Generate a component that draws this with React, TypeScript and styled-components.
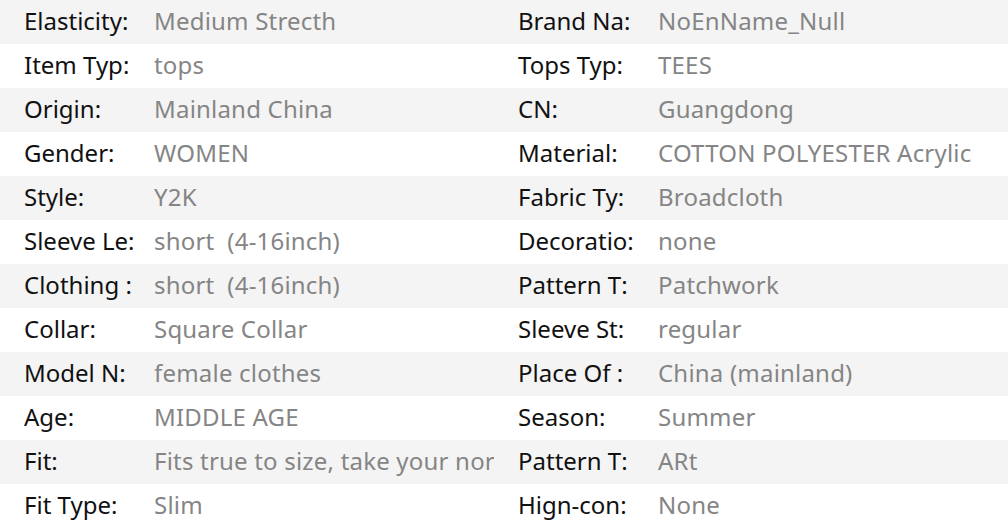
import styled, { createGlobalStyle } from 'styled-components';

const GlobalStyle = createGlobalStyle`
  html, body {
    margin: 0;
    padding: 0;
    background: #ffffff;
  }
  body {
    font-family: 'Noto Sans', 'Open Sans', sans-serif;
  }
`;

const specs: [string, string, string, string][] = [
  ['Elasticity:', 'Medium Strecth', 'Brand Na:', 'NoEnName_Null'],
  ['Item Typ:', 'tops', 'Tops Typ:', 'TEES'],
  ['Origin:', 'Mainland China', 'CN:', 'Guangdong'],
  ['Gender:', 'WOMEN', 'Material:', 'COTTON POLYESTER Acrylic'],
  ['Style:', 'Y2K', 'Fabric Ty:', 'Broadcloth'],
  ['Sleeve Le:', 'short\u00a0 (4-16inch)', 'Decoratio:', 'none'],
  ['Clothing :', 'short\u00a0 (4-16inch)', 'Pattern T:', 'Patchwork'],
  ['Collar:', 'Square Collar', 'Sleeve St:', 'regular'],
  ['Model N:', 'female clothes', 'Place Of :', 'China (mainland)'],
  ['Age:', 'MIDDLE AGE', 'Season:', 'Summer'],
  ['Fit:', 'Fits true to size, take your nor', 'Pattern T:', 'ARt'],
  ['Fit Type:', 'Slim', 'Hign-con:', 'None'],
];

const Table = styled.div`
  width: 1008px;
  display: flex;
  flex-direction: column;
`;

const Row = styled.div<{ $shaded: boolean }>`
  display: grid;
  grid-template-columns: 494px 1fr;
  height: 44px;
  background: ${props => (props.$shaded ? '#f4f4f4' : '#ffffff')};
`;

const Cell = styled.div<{ $labelWidth: number }>`
  display: grid;
  grid-template-columns: ${props => props.$labelWidth}px 1fr;
  align-items: center;
  padding: 0 0 3px 24px;
  overflow: hidden;
  font-size: 24px;
  line-height: 30px;
  white-space: nowrap;
`;

const Label = styled.span`
  color: #111111;
`;

const Value = styled.span`
  color: #858585;
  letter-spacing: 0.2px;
`;

export default function App() {
  return (
    <>
      <GlobalStyle />
      <Table>
        {specs.map(([l1, v1, l2, v2], i) => (
          <Row key={i} $shaded={i % 2 === 0}>
            <Cell $labelWidth={130}>
              <Label>{l1}</Label>
              <Value>{v1}</Value>
            </Cell>
            <Cell $labelWidth={140}>
              <Label>{l2}</Label>
              <Value>{v2}</Value>
            </Cell>
          </Row>
        ))}
      </Table>
    </>
  );
}
